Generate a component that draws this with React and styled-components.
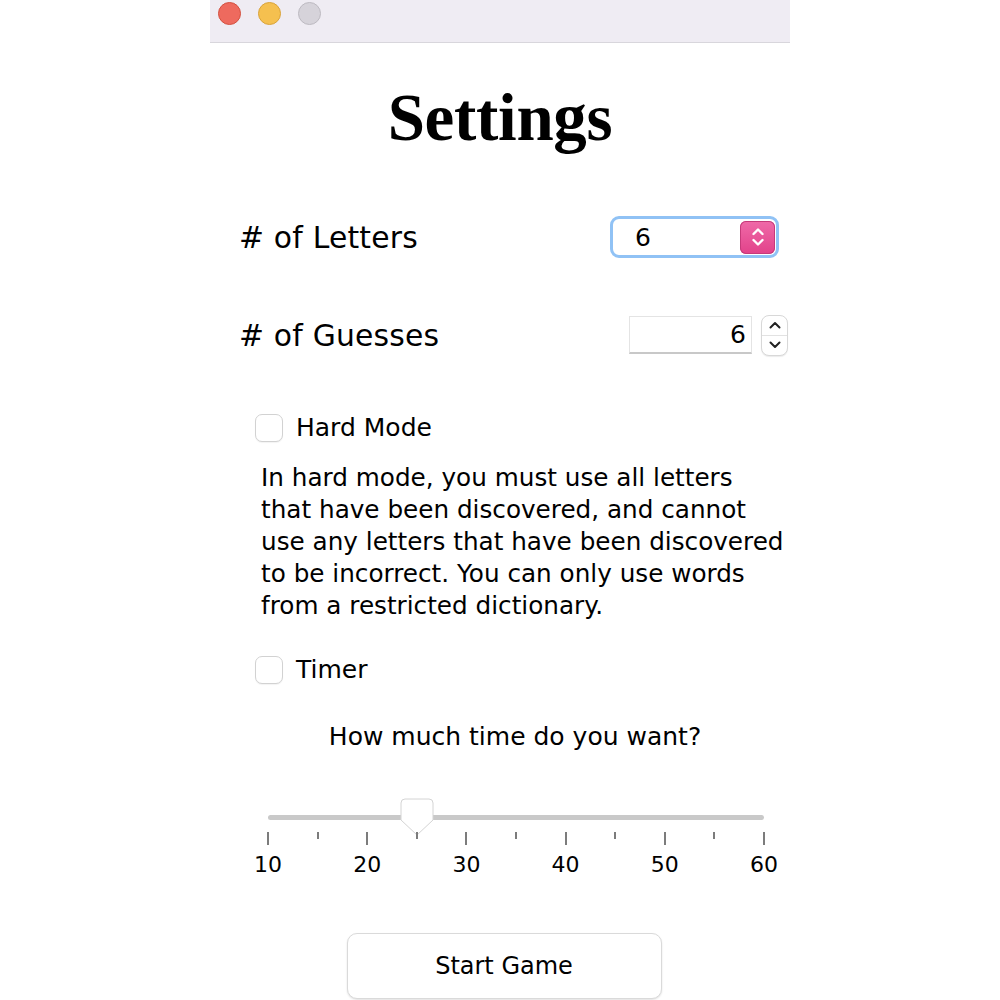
import React, { useState } from "react";
import styled, { createGlobalStyle } from "styled-components";

const GlobalStyle = createGlobalStyle`
  html, body {
    margin: 0;
    padding: 0;
    background: #ffffff;
  }
  body {
    font-family: "DejaVu Sans", Verdana, sans-serif;
    color: #000;
  }
`;

const Page = styled.div`
  width: 1000px;
  height: 1000px;
  display: flex;
  justify-content: center;
  overflow: hidden;
`;

const Window = styled.div`
  width: 580px;
  display: flex;
  flex-direction: column;
  background: #fff;
`;

const TitleBar = styled.div`
  height: 43px;
  background: #efecf3;
  border-bottom: 1px solid #d8d6dc;
  display: flex;
  align-items: flex-start;
  padding: 2px 0 0 8px;
  gap: 17px;
  box-sizing: border-box;
`;

const Light = styled.span`
  width: 23px;
  height: 23px;
  border-radius: 50%;
  box-sizing: border-box;
  background: ${(p) => p.$fill};
  border: 1px solid ${(p) => p.$edge};
`;

const Content = styled.div`
  display: flex;
  flex-direction: column;
  padding: 0 0 0 31px;
`;

const Title = styled.h1`
  margin: 34px 0 0 -31px;
  text-align: center;
  font-family: "Liberation Serif", "DejaVu Serif", serif;
  font-weight: 700;
  font-size: 67px;
  line-height: 80px;
  letter-spacing: -0.3px;
`;

const Row = styled.div`
  display: flex;
  align-items: center;
  justify-content: space-between;
  height: 44px;
  margin-top: ${(p) => p.$top}px;
  padding-right: ${(p) => p.$right}px;
`;

const Label = styled.span`
  font-size: 29.8px;
  letter-spacing: 0.2px;
  margin-left: -2px;
`;

const Select = styled.div`
  width: 169px;
  height: 42px;
  box-sizing: border-box;
  border: 3px solid #90c2f5;
  border-radius: 9px;
  display: flex;
  align-items: center;
  justify-content: space-between;
  padding: 0 1px 0 22px;
  font-size: 25px;
`;

const PinkStep = styled.div`
  width: 35px;
  height: 33px;
  border-radius: 6px;
  background: linear-gradient(#ef6aa8, #e2428a);
  box-shadow: inset 0 0 0 1px #c53a7a;
  display: flex;
  align-items: center;
  justify-content: center;
`;

const NumberGroup = styled.div`
  display: flex;
  align-items: center;
  gap: 9px;
`;

const NumberField = styled.div`
  width: 123px;
  height: 38px;
  box-sizing: border-box;
  border: 1px solid #e4e4e4;
  border-bottom: 2px solid #c8c8c8;
  display: flex;
  align-items: center;
  justify-content: flex-end;
  padding-right: 5px;
  font-size: 25px;
`;

const Stepper = styled.div`
  width: 27px;
  height: 41px;
  box-sizing: border-box;
  border-radius: 8px;
  border: 1px solid #d8d8d8;
  box-shadow: 0 1px 1px rgba(0, 0, 0, 0.08);
  display: flex;
  flex-direction: column;
  align-items: center;
  background: #fff;
`;

const StepHalf = styled.div`
  flex: 1;
  width: 100%;
  display: flex;
  align-items: center;
  justify-content: center;
  border-bottom: ${(p) => (p.$split ? "1px solid #e2e2e2" : "none")};
`;

const CheckRow = styled.label`
  display: flex;
  align-items: center;
  gap: 13px;
  margin-top: ${(p) => p.$top}px;
  padding-left: 14px;
  font-size: 25px;
  cursor: pointer;
`;

const Box = styled.span`
  width: 28px;
  height: 28px;
  box-sizing: border-box;
  border: 1px solid #d2d2d2;
  border-radius: 7px;
  background: #fff;
  box-shadow: 0 1px 1px rgba(0, 0, 0, 0.05);
`;

const Description = styled.p`
  margin: 20px 0 0 20px;
  width: 526px;
  font-size: 24.7px;
  line-height: 32px;
`;

const Question = styled.div`
  margin: 38px 0 0 -1px;
  text-align: center;
  font-size: 25px;
`;

const SliderWrap = styled.div`
  position: relative;
  margin: 50px 0 0 27px;
  width: 496px;
  height: 82px;
`;

const Track = styled.div`
  position: absolute;
  left: 0;
  right: 0;
  top: 14px;
  height: 5px;
  border-radius: 3px;
  background: #c9c9c9;
`;

const Thumb = styled.svg`
  position: absolute;
  top: -3px;
  overflow: visible;
`;

const Ticks = styled.div`
  position: absolute;
  left: 0;
  right: 0;
  top: 31px;
  height: 14px;
`;

const Tick = styled.span`
  position: absolute;
  top: 0;
  width: 2px;
  margin-left: -1px;
  height: ${(p) => (p.$major ? 13 : 7)}px;
  background: #7c7c7c;
`;

const TickLabel = styled.span`
  position: absolute;
  top: 51px;
  transform: translateX(-50%);
  font-size: 22px;
`;

const ButtonRow = styled.div`
  display: flex;
  justify-content: center;
  margin: 50px 0 0 -23px;
`;

const StartButton = styled.button`
  width: 315px;
  height: 66px;
  border: 1px solid #dadada;
  border-radius: 10px;
  background: #fff;
  box-shadow: 0 1px 2px rgba(0, 0, 0, 0.12);
  font-family: "DejaVu Sans", Verdana, sans-serif;
  font-size: 24px;
  padding: 0;
  color: #000;
`;

const Chevrons = ({ color }) => (
  <svg width="14" height="24" viewBox="0 0 14 24" fill="none">
    <path d="M2.5 9 L7 4.5 L11.5 9" stroke={color} strokeWidth="2.4" strokeLinecap="round" strokeLinejoin="round" />
    <path d="M2.5 15 L7 19.5 L11.5 15" stroke={color} strokeWidth="2.4" strokeLinecap="round" strokeLinejoin="round" />
  </svg>
);

const Chevron = ({ up }) => (
  <svg width="12" height="8" viewBox="0 0 12 8" fill="none">
    <path
      d={up ? "M1.5 6.5 L6 2 L10.5 6.5" : "M1.5 1.5 L6 6 L10.5 1.5"}
      stroke="#222"
      strokeWidth="2"
      strokeLinecap="round"
      strokeLinejoin="round"
    />
  </svg>
);

const marks = [10, 15, 20, 25, 30, 35, 40, 45, 50, 55, 60];

export default function App() {
  const [value] = useState(25);
  const pos = (v) => ((v - 10) / 50) * 496;

  return (
    <Page>
      <GlobalStyle />
      <Window>
        <TitleBar>
          <Light $fill="#ee6a5e" $edge="#d3503f" />
          <Light $fill="#f5c04f" $edge="#d9a33a" />
          <Light $fill="#d6d3da" $edge="#bdbac1" />
        </TitleBar>
        <Content>
          <Title>Settings</Title>

          <Row $top={58} $right={11}>
            <Label># of Letters</Label>
            <Select>
              <span>6</span>
              <PinkStep>
                <Chevrons color="#fff" />
              </PinkStep>
            </Select>
          </Row>

          <Row $top={54} $right={2}>
            <Label># of Guesses</Label>
            <NumberGroup>
              <NumberField>6</NumberField>
              <Stepper>
                <StepHalf $split>
                  <Chevron up />
                </StepHalf>
                <StepHalf>
                  <Chevron />
                </StepHalf>
              </Stepper>
            </NumberGroup>
          </Row>

          <CheckRow $top={56}>
            <Box />
            Hard Mode
          </CheckRow>

          <Description>
            In hard mode, you must use all letters that have been discovered, and cannot use any
            letters that have been discovered to be incorrect. You can only use words from a
            restricted dictionary.
          </Description>

          <CheckRow $top={33}>
            <Box />
            Timer
          </CheckRow>

          <Question>How much time do you want?</Question>

          <SliderWrap>
            <Track />
            <Thumb width="34" height="38" viewBox="0 0 34 38" style={{ left: pos(value) - 17 }}>
              <path
                d="M5 1 H29 Q33 1 33 5 V22 L17 37 L1 22 V5 Q1 1 5 1 Z"
                fill="#fff"
                stroke="#d4d4d4"
                strokeWidth="1"
              />
            </Thumb>
            <Ticks>
              {marks.map((m) => (
                <Tick key={m} $major={m % 10 === 0} style={{ left: pos(m) }} />
              ))}
            </Ticks>
            {marks
              .filter((m) => m % 10 === 0)
              .map((m) => (
                <TickLabel key={m} style={{ left: pos(m) }}>
                  {m}
                </TickLabel>
              ))}
          </SliderWrap>

          <ButtonRow>
            <StartButton>Start Game</StartButton>
          </ButtonRow>
        </Content>
      </Window>
    </Page>
  );
}
